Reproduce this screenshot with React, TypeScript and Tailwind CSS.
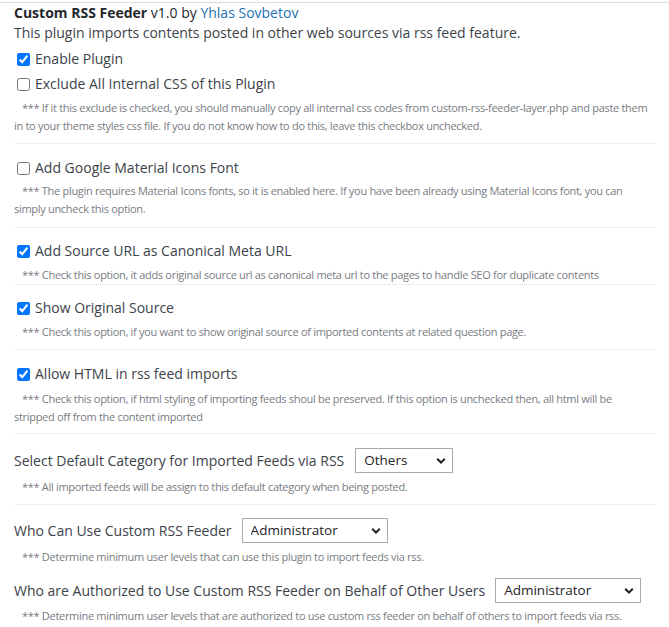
import React from "react";

const FONT = { fontFamily: '"Open Sans", "Noto Sans", sans-serif' };

function Chevron() {
  return (
    <svg
      width="10"
      height="7"
      viewBox="0 0 10 7"
      className="pointer-events-none absolute right-[7px] top-1/2 -translate-y-1/2"
    >
      <path d="M1.2 1.3 L5 5 L8.8 1.3" fill="none" stroke="#1d2327" strokeWidth="2" />
    </svg>
  );
}

function Select({ value, width }: { value: string; width: string }) {
  return (
    <div className={`relative ${width} h-[25px] shrink-0`}>
      <select
        defaultValue={value}
        className="h-full w-full appearance-none border border-[#a7aaad] bg-white pl-[8px] text-[13.5px] text-[#1d2327] outline-none"
        style={FONT}
      >
        <option>{value}</option>
      </select>
      <Chevron />
    </div>
  );
}

function Check({ label, checked, className = "" }: { label: string; checked?: boolean; className?: string }) {
  return (
    <label className={`flex h-[20px] items-center text-[14px] leading-[20px] text-[#3c434a] ${className}`}>
      <input
        type="checkbox"
        defaultChecked={checked}
        className="ml-[3px] mr-[5px] h-[13px] w-[13px]"
      />
      {label}
    </label>
  );
}

function Note({ children, className = "" }: { children: React.ReactNode; className?: string }) {
  return (
    <p className={`indent-[8px] text-[11px] leading-[18px] tracking-[-0.3px] text-[#787c82] ${className}`}>
      {children}
    </p>
  );
}

export default function App() {
  return (
    <div className="h-[627px] w-[669px] overflow-hidden bg-white" style={FONT}>
      <div className="mt-[2px] border-t border-[#dcdcde] px-[14px]">
        <h1 className="text-[14px] leading-[20px] text-[#23282d]">
          <span className="font-bold">Custom RSS Feeder</span> v1.0 by{" "}
          <a className="text-[#2271b1]">Yhlas Sovbetov</a>
        </h1>
        <p className="text-[14px] leading-[20px] text-[#3c434a]">
          This plugin imports contents posted in other web sources via rss feed feature.
        </p>

        <div className="border-b border-dotted border-[#dcdcde] pb-[8px]">
          <Check label="Enable Plugin" checked className="mt-[6px]" />
          <Check label="Exclude All Internal CSS of this Plugin" className="mt-[5px]" />
          <Note className="mt-[5px]">
            *** If it this exclude is checked, you should manually copy all internal css codes from
            custom-rss-feeder-layer.php and paste them in to your theme styles css file. If you do not
            know how to do this, leave this checkbox unchecked.
          </Note>
        </div>

        <div className="border-b border-dotted border-[#dcdcde] pb-[9px]">
          <Check label="Add Google Material Icons Font" className="mt-[14px]" />
          <Note className="mt-[4px]">
            *** The plugin requires Material Icons fonts, so it is enabled here. If you have been already
            using Material Icons font, you can simply uncheck this option.
          </Note>
        </div>

        <div className="border-b border-dotted border-[#dcdcde]">
          <Check label="Add Source URL as Canonical Meta URL" checked className="mt-[13px]" />
          <Note className="mt-[5px]">
            *** Check this option, it adds original source url as canonical meta url to the pages to
            handle SEO for duplicate contents
          </Note>
        </div>

        <div className="border-b border-dotted border-[#dcdcde] pb-[8px]">
          <Check label="Show Original Source" checked className="mt-[13px]" />
          <Note className="mt-[5px]">
            *** Check this option, if you want to show original source of imported contents at related
            question page.
          </Note>
        </div>

        <div className="border-b border-dotted border-[#dcdcde] pb-[7px]">
          <Check label="Allow HTML in rss feed imports" checked className="mt-[14px]" />
          <Note className="mt-[6px]">
            *** Check this option, if html styling of importing feeds shoul be preserved. If this option
            is unchecked then, all html will be
            <br />
            stripped off from the content imported
          </Note>
        </div>

        <div className="border-b border-dotted border-[#dcdcde] pb-[8px]">
          <div className="mt-[14px] flex h-[25px] items-center gap-[11px] text-[14px] text-[#3c434a]">
            <span>Select Default Category for Imported Feeds via RSS</span>
            <Select value="Others" width="w-[98px]" />
          </div>
          <Note className="mt-[5px]">
            *** All imported feeds will be assign to this default category when being posted.
          </Note>
        </div>

        <div>
          <div className="mt-[13px] flex h-[25px] items-center gap-[10px] text-[14px] text-[#3c434a]">
            <span>Who Can Use Custom RSS Feeder</span>
            <Select value="Administrator" width="w-[146px]" />
          </div>
          <Note className="mt-[5px]">
            *** Determine minimum user levels that can use this plugin to import feeds via rss.
          </Note>
          <div className="mt-[12px] flex h-[25px] items-center gap-[10px] text-[14px] text-[#3c434a]">
            <span className="whitespace-nowrap">Who are Authorized to Use Custom RSS Feeder on Behalf of Other Users</span>
            <Select value="Administrator" width="w-[146px]" />
          </div>
          <Note className="mt-[4px]">
            *** Determine minimum user levels that are authorized to use custom rss feeder on behalf of
            others to import feeds via rss.
          </Note>
        </div>
      </div>
    </div>
  );
}
